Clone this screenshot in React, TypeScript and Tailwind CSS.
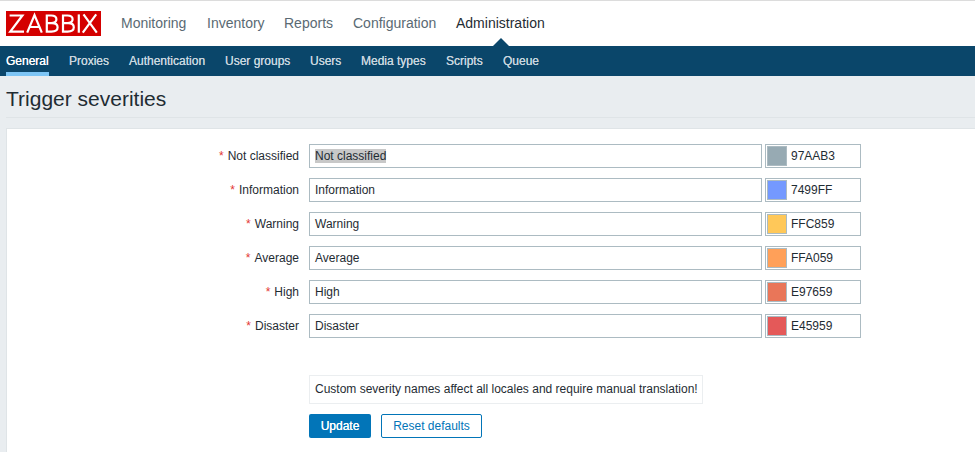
const mainNav = [
  { label: "Monitoring", width: "w-[66px]" },
  { label: "Inventory", width: "w-[57px]" },
  { label: "Reports", width: "w-[49px]" },
  { label: "Configuration", width: "w-[83px]" },
  { label: "Administration", width: "w-[89px]", active: true },
];

const subNav = [
  { label: "General", width: "w-[43px]", active: true },
  { label: "Proxies", width: "w-10" },
  { label: "Authentication", width: "w-19" },
  { label: "User groups", width: "w-[65px]" },
  { label: "Users", width: "w-[31px]" },
  { label: "Media types", width: "w-[65px]" },
  { label: "Scripts", width: "w-[37px]" },
  { label: "Queue", width: "w-9" },
];

const severities = [
  { name: "Not classified", code: "97AAB3", swatch: "bg-[#97aab3]", selected: true },
  { name: "Information", code: "7499FF", swatch: "bg-[#7499ff]" },
  { name: "Warning", code: "FFC859", swatch: "bg-[#ffc859]" },
  { name: "Average", code: "FFA059", swatch: "bg-[#ffa059]" },
  { name: "High", code: "E97659", swatch: "bg-[#e97659]" },
  { name: "Disaster", code: "E45959", swatch: "bg-[#e45959]" },
];

function Logo() {
  return (
    <svg className="h-[25px] w-[95px] shrink-0" viewBox="0 0 95 25" role="img" aria-label="Zabbix">
      <rect width="95" height="25" fill="#d40000" />
      <g fill="none" stroke="#fff" strokeWidth="2.2">
        <path d="M3.6 4.5H16.4L4.3 20.6H18" />
        <path d="M21.2 21.7L28.5 4.2L35.8 21.7M23.8 16H33.2" />
        <path d="M40.8 4.5V20.6H45.4Q51.6 20.6 51.6 16.3Q51.6 12.1 46 12.1H40.8H45.2Q50.4 12.1 50.4 8.3Q50.4 4.5 45.2 4.5Z" />
        <path d="M57 4.5V20.6H61.6Q67.8 20.6 67.8 16.3Q67.8 12.1 62.2 12.1H57H61.4Q66.6 12.1 66.6 8.3Q66.6 4.5 61.4 4.5Z" />
        <path d="M72.8 3.4V21.7" />
        <path d="M77.5 3.4L90.8 21.7M90.2 3.4L76.8 21.7" />
      </g>
    </svg>
  );
}

export default function App() {
  return (
    <div className="flex h-[452px] w-[975px] flex-col overflow-hidden bg-[#e9edf0] font-['Liberation_Sans',Arial,sans-serif] text-xs text-[#1f2c33]">
      <header className="flex h-[46px] shrink-0 items-center border-t border-[#dcdcdc] bg-white pl-1.5">
        <Logo />
        <nav className="ml-5 flex h-full gap-5 text-sm text-[#5a6a73]">
          {mainNav.map((item) => (
            <a
              key={item.label}
              className={`relative flex h-full items-center whitespace-nowrap pb-0.5 ${item.width} ${item.active ? "text-[#1f2c33]" : ""}`}
            >
              {item.label}
              {item.active && (
                <span className="absolute bottom-0 left-[37px] border-x-8 border-b-8 border-x-transparent border-b-[#0a466a]" />
              )}
            </a>
          ))}
        </nav>
      </header>

      <nav className="flex h-[30px] shrink-0 gap-5 bg-[#0a466a] pl-1.5 text-[#c8d6df]">
        {subNav.map((item) => (
          <a
            key={item.label}
            className={`flex h-full items-center whitespace-nowrap border-y-4 border-t-transparent text-shadow-[0_0_0_currentColor] ${item.width} ${
              item.active ? "border-b-[#7dc5f5] text-white" : "border-b-transparent"
            }`}
          >
            {item.label}
          </a>
        ))}
      </nav>

      <h1 className="ml-1.5 flex h-[42px] shrink-0 items-center border-b border-[#dfe4e7] pt-1 text-[21px]">
        Trigger severities
      </h1>

      <main className="ml-1.5 mt-2.5 grow border-l border-t border-[#dfe4e7] bg-white pt-[15px]">
        <div className="flex flex-col gap-2.5">
          {severities.map((severity) => (
            <div key={severity.name} className="flex h-6">
              <label className="mr-2.5 flex w-[292px] items-center justify-end gap-1">
                <span className="text-[#e33734]">*</span>
                {severity.name}
              </label>
              <div className="flex w-[453px] items-center border border-[#acbbc2] pl-[5px]">
                <span className={severity.selected ? "bg-[#c8c8c8] leading-3.5" : ""}>{severity.name}</span>
              </div>
              <div className="ml-[3px] flex w-24 items-center border border-[#acbbc2] pl-px">
                <span className={`mr-1 size-5 border border-[#acbbc2] ${severity.swatch}`} />
                {severity.code}
              </div>
            </div>
          ))}
        </div>

        <div className="ml-[302px] mt-[37px] flex h-[29px] w-[394px] items-center whitespace-nowrap border border-[#ebeef0] pb-0.5 pl-[5px]">
          Custom severity names affect all locales and require manual translation!
        </div>
        <div className="ml-[302px] mt-2.5 flex gap-2.5">
          <button className="h-6 w-[62px] rounded-xs bg-[#0275b8] text-white text-shadow-[0_0_0_currentColor]">
            Update
          </button>
          <button className="h-6 w-[101px] rounded-xs border border-[#0275b8] bg-white text-[#0275b8]">
            Reset defaults
          </button>
        </div>
      </main>
    </div>
  );
}
